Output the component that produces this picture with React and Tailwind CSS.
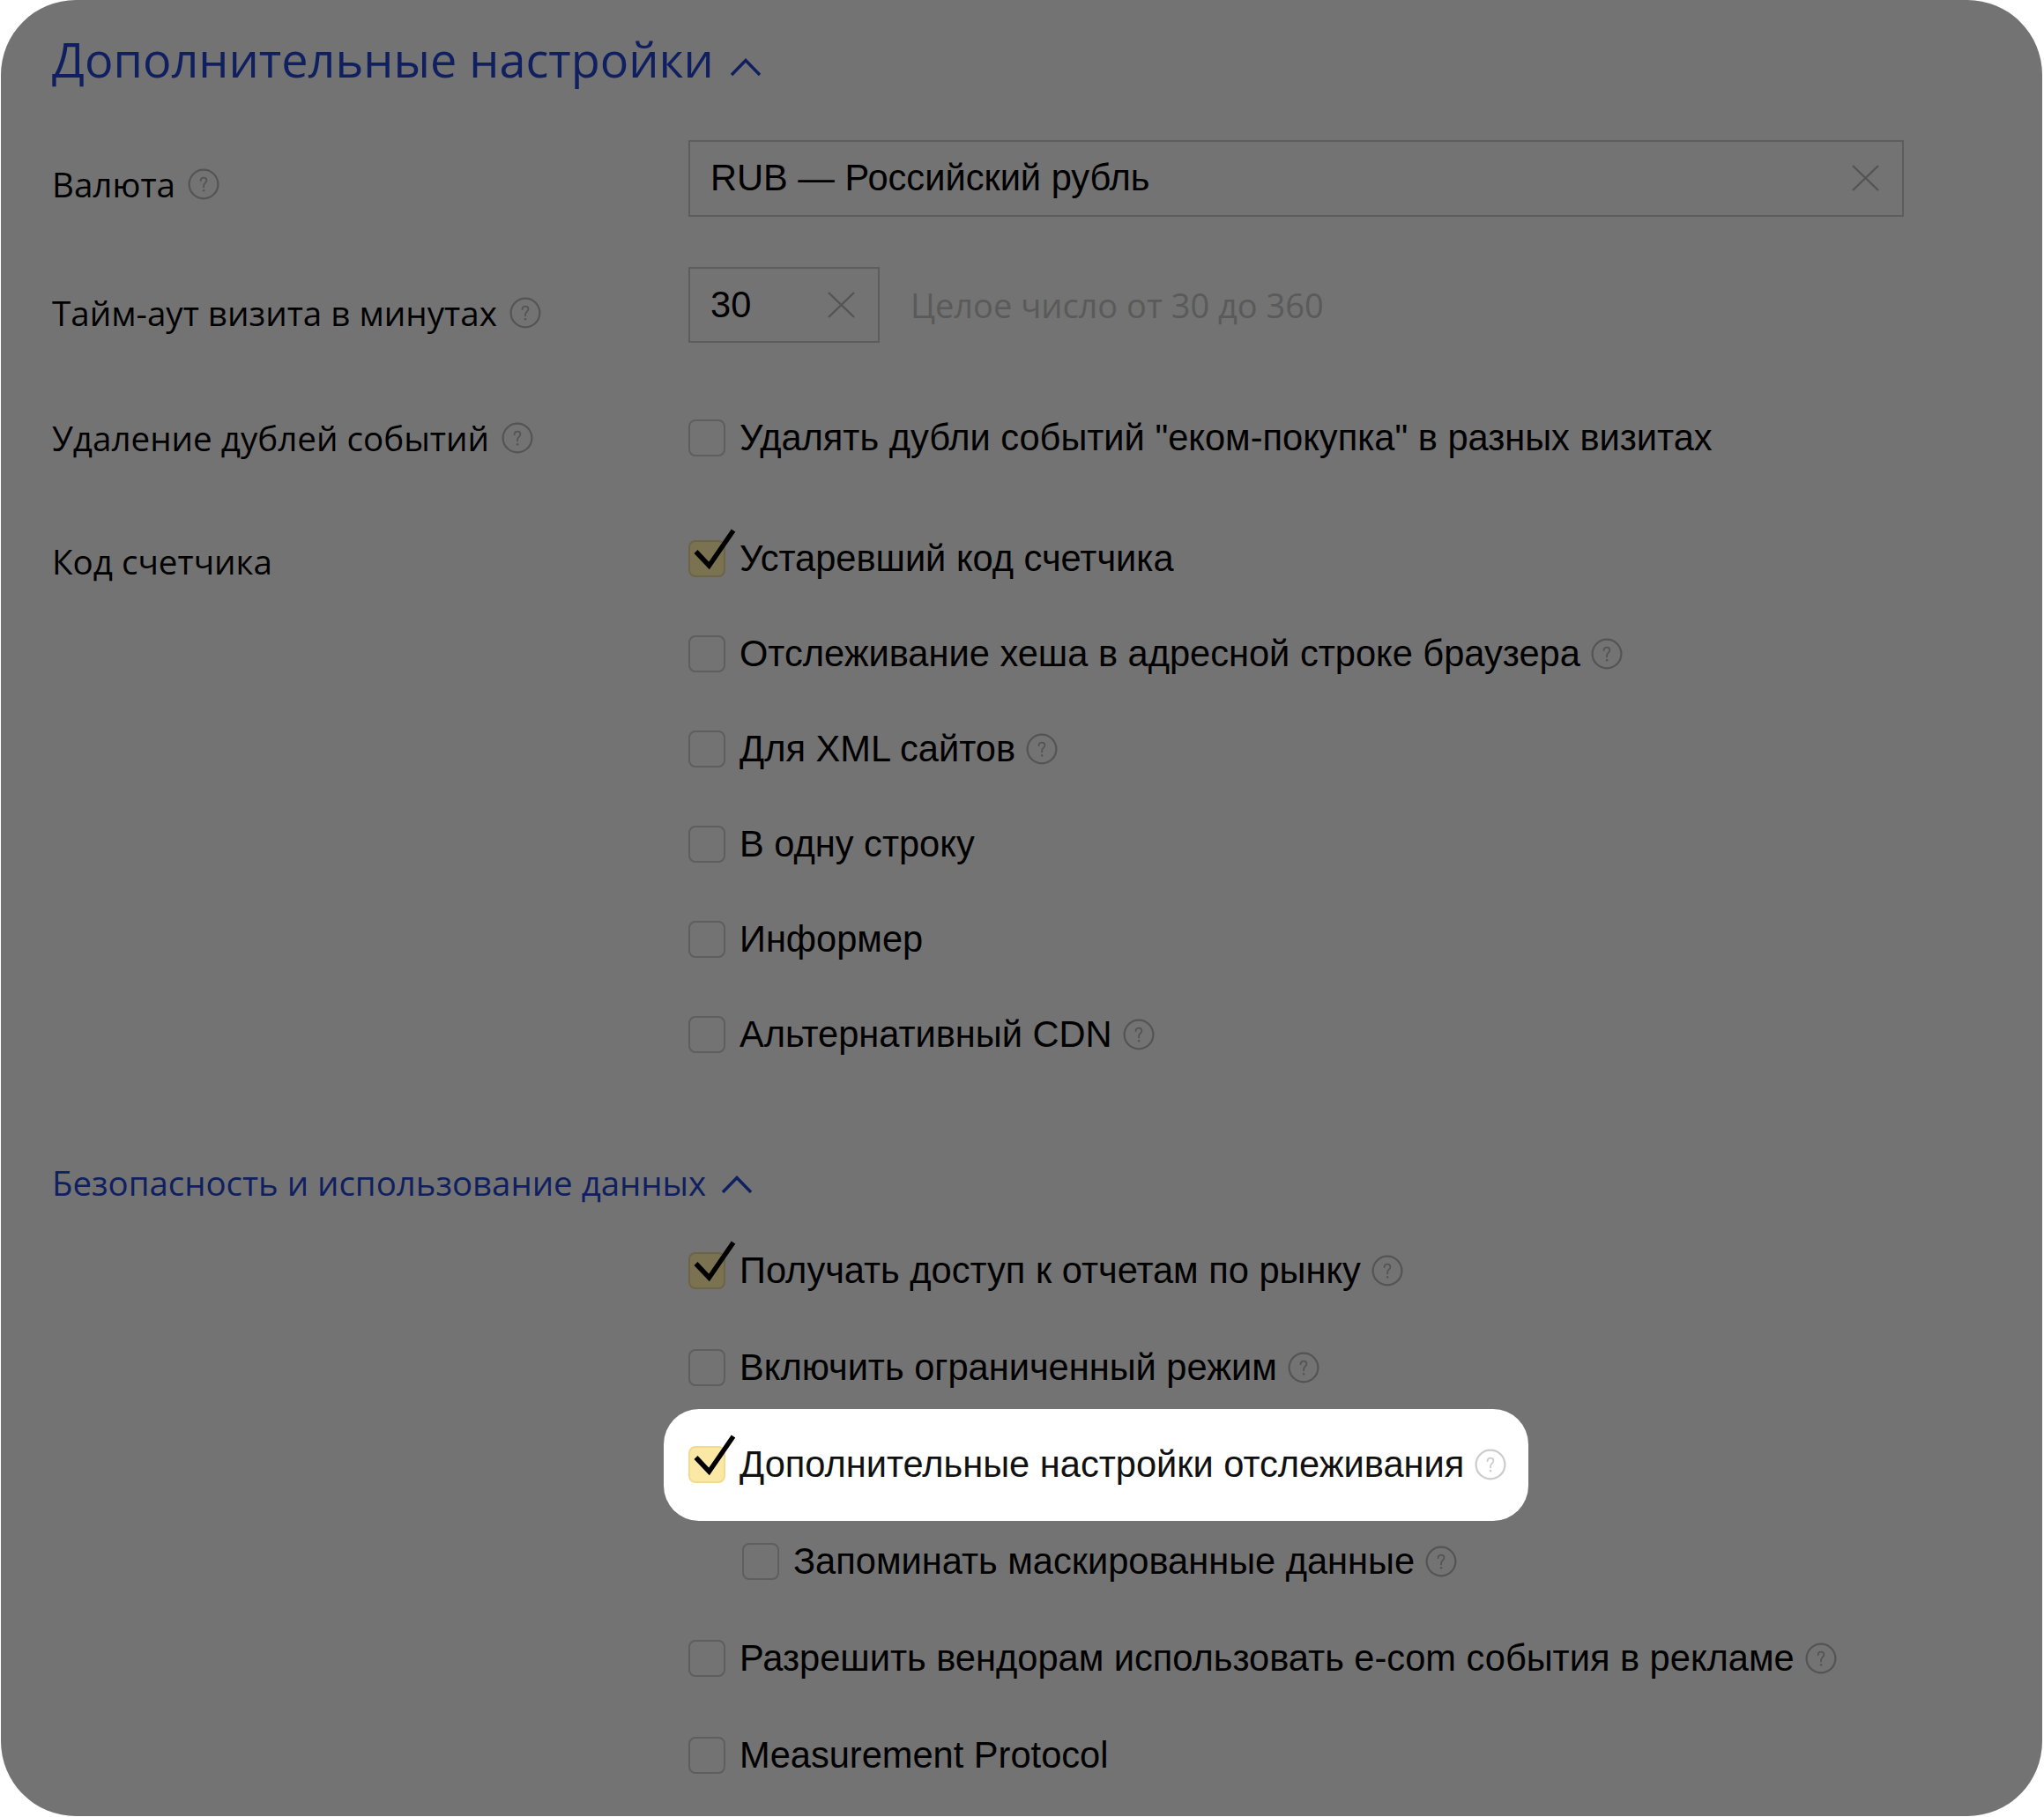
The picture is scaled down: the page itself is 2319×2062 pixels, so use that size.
import React from "react";

function Help({ light }) {
  const c = light ? "#cccccc" : "#545454";
  return (
    <svg width="36" height="36" viewBox="0 0 36 36" fill="none" className="shrink-0">
      <circle cx="18" cy="18" r="16.4" stroke={c} strokeWidth="2.2" />
      <path
        d="M14.6 14.2 C14.6 11.9 16.1 10.6 18 10.6 C19.9 10.6 21.4 11.9 21.4 13.8 C21.4 16.4 18.1 16.9 18.1 19.8 V21.4"
        stroke={c}
        strokeWidth="1.8"
        strokeLinecap="round"
      />
      <circle cx="18.1" cy="25.2" r="1.2" fill={c} />
    </svg>
  );
}

function Cross() {
  return (
    <svg width="33" height="30" viewBox="0 0 33 30" fill="none" className="shrink-0">
      <path d="M2 1 L31 29 M31 1 L2 29" stroke="#545454" strokeWidth="2.4" />
    </svg>
  );
}

function Chevron() {
  return (
    <svg width="36" height="21" viewBox="0 0 36 21" fill="none" className="shrink-0">
      <path d="M2 19 L18 2.5 L34 19" stroke="#0f1f5f" strokeWidth="3.4" />
    </svg>
  );
}

function Box({ checked, light }) {
  const cls = checked
    ? light
      ? "bg-[#fbe8a4] border-[#f2da8e]"
      : "bg-[#7b7251] border-[#6c6446]"
    : "border-[#5e5e5e]";
  return (
    <div className={`relative w-[42px] h-[42px] shrink-0 rounded-[8px] border-2 ${cls}`}>
      {checked && (
        <svg
          width="60"
          height="60"
          viewBox="0 0 60 60"
          fill="none"
          className="absolute -left-[2px] -top-[18px]"
        >
          <path d="M8.5 29 L23.5 45 L51 5" stroke="#000" strokeWidth="5.5" strokeLinejoin="miter" />
        </svg>
      )}
    </div>
  );
}

function Item({ label, checked, help, light, h = "h-[108px]" }) {
  return (
    <div className={`flex items-center ${h}`}>
      <Box checked={checked} light={light} />
      <span className="ml-[16px] text-[41.6px] leading-none text-black whitespace-nowrap">{label}</span>
      {help && (
        <span className="ml-[12px] flex">
          <Help light={light} />
        </span>
      )}
    </div>
  );
}

function Label({ children, help }) {
  return (
    <div className="w-[722px] shrink-0 flex items-center font-['Open_Sans',sans-serif] text-[38.6px] leading-none text-black">
      <span className="whitespace-nowrap">{children}</span>
      {help && (
        <span className="ml-[14px] flex">
          <Help />
        </span>
      )}
    </div>
  );
}

export default function App() {
  return (
    <div className="w-[2319px] h-[2062px] bg-white">
      <div className="ml-[1px] w-[2316px] h-[2061px] rounded-[85px] bg-[#737373] pl-[58px] overflow-hidden font-['Liberation_Sans',Arial,sans-serif]">
        {/* Title */}
        <div className="h-[134px] flex items-center">
          <h1 className="font-['Open_Sans',sans-serif] text-[54px] leading-none font-normal text-[#0f1f5f] whitespace-nowrap">
            Дополнительные настройки
          </h1>
          <span className="ml-[18px] mt-[18px] flex">
            <Chevron />
          </span>
        </div>

        {/* Валюта */}
        <div className="h-[136px] flex items-center">
          <div className="mt-[14px] flex">
            <Label help>Валюта</Label>
          </div>
          <div className="w-[1379px] h-[87px] border-2 border-[#5d5d5d] flex items-center justify-between pl-[23px] pr-[25px]">
            <span className="text-[41.6px] leading-none text-black whitespace-nowrap">RUB — Российский рубль</span>
            <Cross />
          </div>
        </div>

        {/* Тайм-аут */}
        <div className="h-[152px] flex items-center">
          <div className="mt-[18px] flex">
            <Label help>Тайм-аут визита в минутах</Label>
          </div>
          <div className="w-[217px] h-[86px] border-2 border-[#5d5d5d] flex items-center justify-between pl-[23px] pr-[25px]">
            <span className="text-[41.6px] leading-none text-black">30</span>
            <Cross />
          </div>
          <span className="ml-[35px] font-['Open_Sans',sans-serif] text-[38px] leading-none text-[#5a5a5a] whitespace-nowrap">
            Целое число от 30 до 360
          </span>
        </div>

        {/* Удаление дублей */}
        <div className="h-[150px] flex items-center">
          <Label help>Удаление дублей событий</Label>
          <Item label={'Удалять дубли событий "еком-покупка" в разных визитах'} h="h-[150px]" />
        </div>

        {/* Код счетчика */}
        <div className="mt-[8px] flex">
          <div className="h-[108px] flex items-center">
            <div className="mt-[6px] flex">
              <Label>Код счетчика</Label>
            </div>
          </div>
          <div className="flex flex-col">
            <Item label="Устаревший код счетчика" checked />
            <Item label="Отслеживание хеша в адресной строке браузера" help />
            <Item label="Для XML сайтов" help />
            <Item label="В одну строку" />
            <Item label="Информер" />
            <Item label="Альтернативный CDN" help />
          </div>
        </div>

        {/* Безопасность */}
        <div className="mt-[69px] h-[90px] flex items-center">
          <span className="font-['Open_Sans',sans-serif] text-[38.4px] leading-none text-[#0f1f5f] whitespace-nowrap">
            Безопасность и использование данных
          </span>
          <span className="ml-[17px] mt-[4px] flex">
            <Chevron />
          </span>
        </div>

        <div className="pl-[722px] flex flex-col">
          <Item label="Получать доступ к отчетам по рынку" checked help h="h-[110px]" />
          <Item label="Включить ограниченный режим" help h="h-[110px]" />
          <div className="-ml-[28px] -my-[8.5px] w-fit h-[127px] pl-[28px] pr-[25px] rounded-[40px] bg-white flex items-center">
            <Box checked light />
            <span className="ml-[16px] text-[41.6px] leading-none text-[#111] whitespace-nowrap">
              Дополнительные настройки отслеживания
            </span>
            <span className="ml-[12px] flex">
              <Help light />
            </span>
          </div>
          <div className="pl-[61px]">
            <Item label="Запоминать маскированные данные" help h="h-[110px]" />
          </div>
          <Item label="Разрешить вендорам использовать e-com события в рекламе" help h="h-[110px]" />
          <Item label="Measurement Protocol" h="h-[110px]" />
        </div>
      </div>
    </div>
  );
}
